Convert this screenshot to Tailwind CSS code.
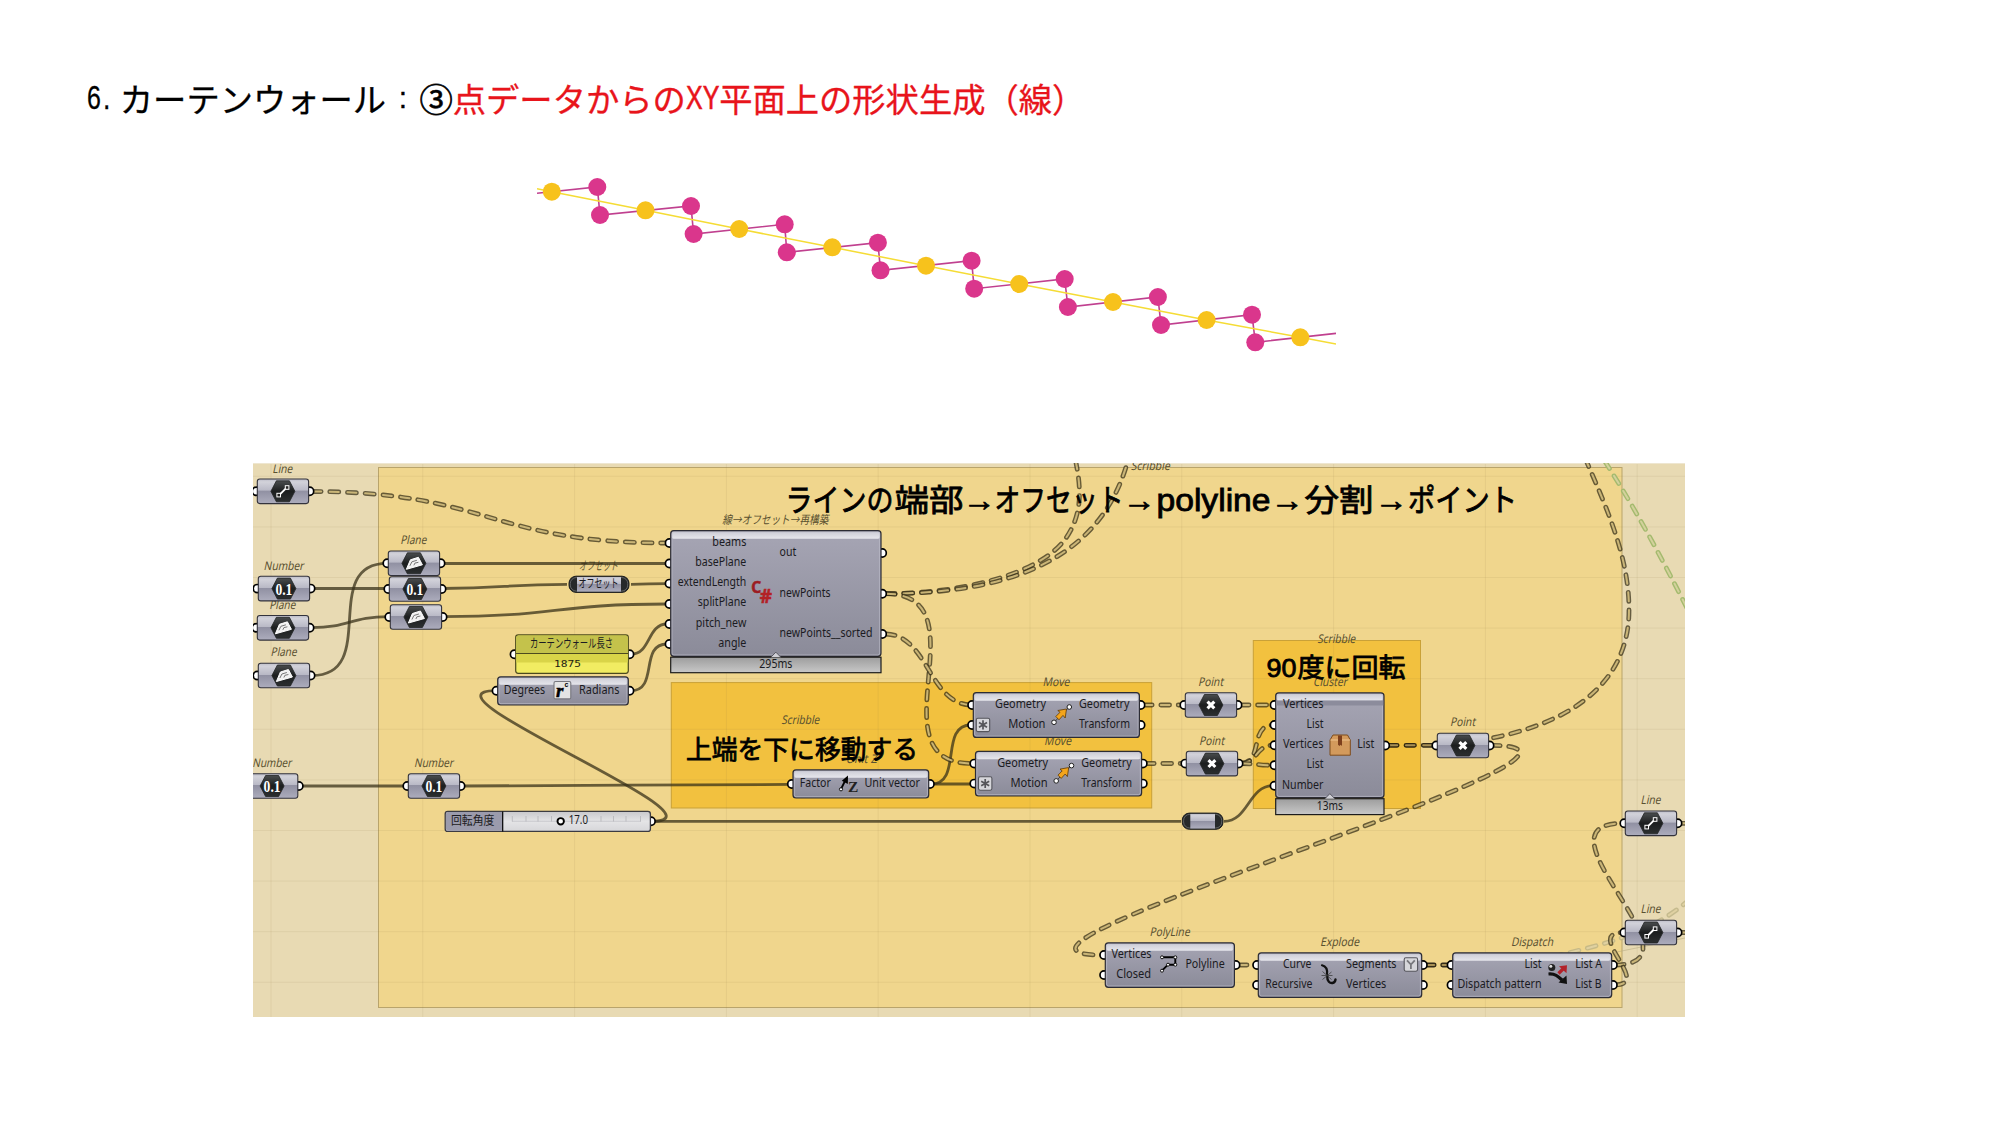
<!DOCTYPE html>
<html lang="ja">
<head>
<meta charset="utf-8">
<title>カーテンウォール</title>
<script src="https://cdn.jsdelivr.net/npm/@tailwindcss/browser@4"></script>
</head>
<body class="bg-white">
<main class="flex h-[1126px] w-[2000px] flex-col overflow-hidden bg-white">
  <h1 class="flex h-[160px] items-start pt-[79px] pl-[86.5px] font-['Noto_Sans_CJK_JP',sans-serif] text-[33.3px] leading-[38px] font-normal whitespace-nowrap text-black [-webkit-text-stroke:0.3px]">
    <span class="flex w-[33.3px] font-['Liberation_Sans',sans-serif]"><span class="inline-block w-[15.5px] origin-left scale-x-75">6</span><span class="inline-block scale-x-80">.</span></span>
    <span>カーテンウォール</span>
    <span class="inline-block w-[33.3px] text-center font-['Liberation_Sans',sans-serif] text-[30px]">:</span>
    <span class="[-webkit-text-stroke:0.7px]">③</span>
    <span class="text-[#e8141b]">点データからの</span>
    <span class="inline-block w-[33.3px] origin-left scale-x-75 font-['Liberation_Sans',sans-serif] text-[#e8141b] [-webkit-text-stroke:0.6px]">XY</span>
    <span class="text-[#e8141b]">平面上の形状生成（線）</span>
  </h1>
  <svg id="zigzag" class="ml-[537px] block h-[200px] w-[799px] shrink-0" viewBox="537 160 799 200"></svg>
  <svg id="canvas" class="mt-[103px] ml-[253px] block h-[554px] w-[1432px] shrink-0 bg-[#e8dab3]" viewBox="253 463 1432 554"></svg>
</main>
<script>
// ---------- zigzag of division points ----------
const mid = [[551.8,191.7],[645.5,210.3],[739.2,229],[832.3,247.3],[926,265.7],[1019.2,284],[1113,302],[1206.6,320],[1300.3,337.3]];
const up = [[597.3,187],[691,206],[784.7,224.3],[877.9,242.7],[971.6,260.7],[1064.7,279],[1157.9,297],[1252,314.7]];
const low = [[600,215],[693.6,234],[786.8,252.3],[880.5,270.3],[974.2,288.7],[1067.9,307],[1161,325],[1255.3,342.3]];
const zig = [[537,193.3]];
up.forEach((p, i) => zig.push(p, low[i]));
zig.push([1336,333.4]);
const dot = (p, c) => `<circle cx="${p[0]}" cy="${p[1]}" r="9" class="${c}"/>`;
document.getElementById('zigzag').innerHTML =
  `<polyline points="${zig.join(' ')}" class="fill-none stroke-[#c0408f] stroke-[1.6]"/>` +
  `<polyline points="${[[537,188.7], ...mid, [1336,344]].join(' ')}" class="fill-none stroke-[#f5dc35] stroke-[1.5]"/>` +
  up.concat(low).map(p => dot(p, 'fill-[#da368c]')).join('') + mid.map(p => dot(p, 'fill-[#f7c21c]')).join('');

// ---------- node graph ----------
let out = `<defs>
<linearGradient id="gs" x2="0" y2="1"><stop offset="0" stop-color="#bdbdc8"/><stop offset=".12" stop-color="#d2d2da"/><stop offset=".46" stop-color="#b9b9c6"/><stop offset=".48" stop-color="#9090a2"/><stop offset="1" stop-color="#adadbd"/></linearGradient>
<linearGradient id="gl" x2="0" y2="1"><stop offset="0" stop-color="#a6a5b4"/><stop offset="1" stop-color="#8b8b99"/></linearGradient>
<linearGradient id="gh" x2="0" y2="1"><stop offset="0" stop-color="#cdcdd6"/><stop offset="1" stop-color="#e6e6ec"/></linearGradient>
<linearGradient id="gt" x2="0" y2="1"><stop offset="0" stop-color="#9d9d9d"/><stop offset="1" stop-color="#c8c8c8"/></linearGradient>
<linearGradient id="gx" x2="0" y2="1"><stop offset="0" stop-color="#4a4d4e"/><stop offset=".5" stop-color="#1c1e1f"/><stop offset="1" stop-color="#2c2f30"/></linearGradient>
<linearGradient id="gw" x2="0" y2="1"><stop offset="0" stop-color="#c8c8cc"/><stop offset=".5" stop-color="#e4e4e6"/><stop offset="1" stop-color="#d6d6d9"/></linearGradient>
</defs>`;
const add = s => { out += s; };

const txt = (s, x, y, w, anchor = 'start') =>
  add(`<text x="${x}" y="${y + 0.5}" text-anchor="${anchor}" ${w ? `textLength="${w}" lengthAdjust="spacingAndGlyphs"` : ''} class="fill-[#1b1b22] font-['Noto_Sans','Noto_Sans_CJK_JP',sans-serif] text-[12px]">${s}</text>`);
const label = (s, cx, y, w) =>
  add(`<g transform="translate(${cx - w / 2 - 0.7} ${y}) skewX(-12)"><text textLength="${w}" lengthAdjust="spacingAndGlyphs" class="fill-[#5a5130] font-['Noto_Sans','Noto_Sans_CJK_JP',sans-serif] text-[12px]">${s}</text></g>`);
const big = (s, x, y, w, size) =>
  add(`<text x="${x}" y="${y}" font-size="${size}" textLength="${w}" lengthAdjust="spacingAndGlyphs" class="fill-black stroke-black stroke-[0.8] font-['Liberation_Sans','Noto_Sans_CJK_JP',sans-serif]">${s}</text>`);
const wire = d => add(`<path d="${d}" class="fill-none stroke-[#3a3119]/75 stroke-[2.8]"/>`);
const dash = (d, kind) => {
  const c = kind === 'green' ? ['stroke-[#a4ba6e]', 'stroke-[#d3d19c]'] : kind === 'faint' ? ['stroke-[#bdb384]/80', 'stroke-[#e6d7a8]/80']
    : kind === 'dark' ? ['stroke-[#1f1a0b]/90', 'stroke-[#a89055]'] : ['stroke-[#3a3119]/75', 'stroke-[#dcc583]/85'];
  add(`<path d="${d}" stroke-dasharray="9 8.7" stroke-dashoffset="-1" stroke-linecap="round" class="fill-none ${c[0]} stroke-[4.8]"/><path d="${d}" stroke-dasharray="9 8.7" stroke-dashoffset="-1" stroke-linecap="round" class="fill-none ${c[1]} stroke-[2]"/>`);
};
const curve = (x0, y0, x1, y1, d = Math.abs(x1 - x0) / 2) => `M${x0},${y0} C${x0 + d},${y0} ${x1 - d},${y1} ${x1},${y1}`;
const port = (x, y) => add(`<circle cx="${x}" cy="${y}" r="4.1" class="fill-white stroke-black stroke-[1.7]"/>`);

// groups and grid
add('<rect x="378.5" y="467.5" width="1243.5" height="540" class="fill-[#f0d68d] stroke-[#b9a46b]"/>');
add('<rect x="671.3" y="682.6" width="480.4" height="125.4" class="fill-[#f2c13f] stroke-[#c9a138]"/>');
add('<rect x="1253.3" y="640.5" width="167.2" height="168" class="fill-[#f2c13f] stroke-[#c9a138]"/>');
for (let i = 0; i < 10; i++) add(`<path d="M${271 + 151.8 * i},463V1017" class="stroke-[#8b7a40]/10"/>`);
for (let i = 0; i < 11; i++) add(`<path d="M253,${476.3 + 50.6 * i}H1685" class="stroke-[#8b7a40]/10"/>`);
add('<path d="M253,463.5H1685" class="stroke-[#eee6d0]"/>');

// captions
label('Line', 283, 472.7, 20); label('Number', 284.3, 570, 40); label('Plane', 283, 608.7, 26); label('Plane', 284.3, 656, 26);
label('Plane', 414, 544, 26); label('オフセット', 599, 570, 39); label('線→オフセット→再構築', 776, 524, 106);
label('Number', 272.5, 767, 39); label('Number', 434.3, 767, 39);
label('Move', 1056.7, 686, 27); label('Move', 1058.3, 744.7, 27); label('Unit Z', 862, 762.5, 31); label('Scribble', 801, 724, 38);
label('Point', 1211.3, 686, 25); label('Point', 1212.3, 744.7, 25); label('Point', 1463.3, 726.3, 25);
label('Cluster', 1330.7, 686.3, 34); label('Scribble', 1337, 642.7, 38); label('Scribble', 1151, 470.3, 39);
label('PolyLine', 1170.3, 935.7, 40); label('Explode', 1340.3, 945.7, 39); label('Dispatch', 1532.7, 946, 42);
label('Line', 1651.3, 804, 20); label('Line', 1651.3, 913.3, 20);

// wires
dash('M1604,460 C1635,508 1660,555 1687,608', 'green');
dash('M1552,957 C1600,945 1650,935 1690,899', 'faint');
add('<path d="M1612,953L1685,938" class="stroke-[#b9ae84]/60"/>');
dash(curve(311, 491.5, 667, 543));
wire(curve(312, 675.5, 387, 563.3, 68));
wire(curve(312, 588.5, 388, 588.5));
wire(curve(311, 627.7, 389, 616.7));
wire(curve(441, 563.5, 667, 563.5));
wire(curve(442, 588.5, 567, 584.3));
wire(curve(631, 584.3, 667, 583.6));
wire(curve(443, 616.7, 667, 604));
wire(curve(631, 654.3, 667, 624, 20));
wire(curve(631, 690.7, 667, 644, 28));
wire(curve(651, 821.3, 496, 690.7, 89));
wire(curve(300, 786, 406, 786));
wire(curve(462, 786, 791, 784.4));
wire(curve(652, 821.3, 1181, 821.3));
wire(curve(1224, 821.3, 1273, 785.7));
wire(curve(931, 784, 971, 725, 32));
wire(curve(931, 784, 973, 784));
dash('M885,593.7 C960,593.7 1040,575 1066,538 C1082,515 1082,490 1075,458');
dash('M885,593.7 C1000,593.7 1100,565 1128,460');
dash(curve(885, 593.7, 972, 763.5, 102));
dash(curve(885, 634, 972, 705));
dash(curve(1142, 705, 1183, 705)); dash(curve(1144, 763.5, 1185, 763.5));
dash(curve(1239, 705, 1273, 705));
dash(curve(1240, 763.5, 1273, 725, 24)); dash(curve(1240, 763.5, 1273, 745.3, 18)); dash(curve(1240, 763.5, 1273, 765.3));
dash(curve(1387, 745.3, 1435, 745.3), 'dark');
dash('M1490,745.3 C1674,745.3 928,955 1102,955');
dash('M1475,741 C1560,728 1629,690 1629,610 C1629,560 1610,515 1585,458');
dash(curve(1614, 965, 1623, 823.3, 97)); dash(curve(1614, 985, 1623, 932.5, 40));
dash(curve(1237, 965, 1256, 965)); dash(curve(1424, 965, 1450, 965), 'dark');
dash(curve(1679, 823.3, 1690, 823.3)); dash(curve(1679, 932.5, 1690, 932.5));

// parameter nodes with hexagonal icon
const hexIcon = {
  line: (x, y) => `<path d="M${x - 4},${y + 4}L${x + 4},${y - 4}" class="stroke-white stroke-[1.8]"/><rect x="${x - 6}" y="${y + 2}" width="3.6" height="3.6" class="fill-[#222] stroke-white"/><rect x="${x + 2.4}" y="${y - 5.6}" width="3.6" height="3.6" class="fill-[#222] stroke-white"/>`,
  num: (x, y) => `<text x="${x}" y="${y + 5.9}" text-anchor="middle" textLength="17" lengthAdjust="spacingAndGlyphs" class="fill-white font-['Liberation_Serif',serif] text-[17px] font-bold">0.1</text>`,
  plane: (x, y) => `<path d="M${x - 7.5},${y + 6}L${x - 3.5},${y - 3.5}L${x + 4.5},${y - 6}L${x + 8.5},${y + 1.5}Z" class="fill-[#f2f2f2] stroke-white"/><path d="M${x - 4},${y + 2.5}L${x - 2},${y - 1.5}L${x + 3},${y - 3}M${x},${y + 2}L${x + 1},${y - .2}L${x + 4.5},${y - 1}" class="fill-none stroke-[#777] stroke-[1]"/>`,
  point: (x, y) => `<path d="M${x - 3.4},${y - 3.4}l6.8,6.8m0,-6.8l-6.8,6.8" class="fill-none stroke-white stroke-[3.1]"/>`
};
const param = (x, y, kind) => {
  const cx = x + 25.6, cy = y + 12.3;
  port(x - 1, cy); port(x + 52.3, cy);
  add(`<rect x="${x}" y="${y}" width="51.3" height="24.6" rx="2.5" fill="url(#gs)" class="stroke-[#33333c] stroke-[1.1]"/>`);
  add(`<path d="M${cx - 12},${cy}L${cx - 6.5},${cy - 10.5}H${cx + 6.5}L${cx + 12},${cy}L${cx + 6.5},${cy + 10.5}H${cx - 6.5}Z" fill="url(#gx)" stroke-linejoin="round" class="stroke-[#222425] stroke-[0.8]"/>` + hexIcon[kind](cx, cy));
};
param(257.3, 479, 'line'); param(258.3, 576.3, 'num'); param(257.3, 615.5, 'plane'); param(258.3, 663.2, 'plane');
param(388.3, 551, 'plane'); param(389.3, 576.7, 'num'); param(390.3, 604.7, 'plane');
param(246.5, 773.7, 'num'); param(408.3, 773.7, 'num');
param(1185.3, 692.7, 'point'); param(1186.3, 751.3, 'point'); param(1437.3, 733.2, 'point');
param(1625.3, 811, 'line'); param(1625.3, 920.2, 'line');

// component bodies
const body = (x, y, r, b, ins, outs) => {
  ins.forEach(v => port(x - 1.2, v)); outs.forEach(v => port(r + 1.2, v));
  add(`<rect x="${x}" y="${y}" width="${r - x}" height="${b - y}" rx="3" fill="url(#gl)"/><rect x="${x + 1}" y="${y + 1}" width="${r - x - 2}" height="7" rx="2" fill="url(#gh)"/><rect x="${x + 1.3}" y="${y + 1.3}" width="${r - x - 2.6}" height="${b - y - 2.6}" rx="2" class="fill-none stroke-[#c3c3d0]/60 stroke-[1]"/><rect x="${x}" y="${y}" width="${r - x}" height="${b - y}" rx="3" class="fill-none stroke-[#2c2c34] stroke-[1.2]"/>`);
};
const timer = (x, y, r, b, s, w) => {
  const c = (x + r) / 2;
  add(`<rect x="${x}" y="${y}" width="${r - x}" height="${b - y}" fill="url(#gt)" class="stroke-[#1c1c1c] stroke-[1.2]"/><path d="M${c - 5},${y}l5,-5l5,5" class="fill-[#cfcfd6] stroke-[#44444c] stroke-[0.8]"/>`);
  txt(s, c, b - 4.9, w, 'middle');
};

// script component
body(670.7, 530.7, 881, 656.3, [543, 563.5, 583.6, 604, 624, 644], [553, 593.7, 634]);
timer(670.7, 657.2, 881, 672.7, '295ms', 33);
[['beams',545.3,34],['basePlane',565.5,51],['extendLength',585.7,68.5],['splitPlane',605.8,48.5],['pitch_new',626,50.5],['angle',646.3,28]].forEach(a => txt(a[0], 746.3, a[1], a[2], 'end'));
txt('out', 779.5, 555.7, 16.7); txt('newPoints', 779.5, 596, 51); txt('newPoints__sorted', 779.5, 636.3, 93);
add(`<text x="751.3" y="593.3" class="fill-[#9c1c22] stroke-[#9c1c22] stroke-[0.5] font-['Noto_Sans',sans-serif] text-[15.5px] font-bold">C</text><text x="759.8" y="603.2" class="fill-[#b32025] stroke-[#b32025] stroke-[0.5] font-['Noto_Sans',sans-serif] text-[19px] font-bold">#</text>`);

// relay capsules
const relay = (x, y, r) => {
  add(`<rect x="${x}" y="${y}" width="${r - x}" height="16.2" rx="7" class="fill-[#26292a] stroke-[#1c1e1f] stroke-[1]"/><rect x="${x + 1.3}" y="${y + 1.3}" width="${r - x - 2.6}" height="13.6" rx="6" class="fill-none stroke-[#6d7072] stroke-[0.8]"/><rect x="${x + 8}" y="${y + .8}" width="${r - x - 16}" height="14.6" fill="url(#gs)"/>`);
};
relay(569, 576.2, 629); relay(1182.3, 813.1, 1223);
txt('オフセット', 578.5, 587.7, 40);

// panel
port(514.5, 654.3); port(629.5, 654.3);
add('<rect x="515.7" y="634.8" width="112.6" height="38.5" rx="2.5" class="fill-[#f1ec62] stroke-[#4c4a1e] stroke-[1.2]"/><path d="M516.3,653.4V637.5a2,2 0 0 1 2,-2H625.7a2,2 0 0 1 2,2V653.4Z" class="fill-[#c4c24b]"/><rect x="516.4" y="654" width="111.3" height="8.5" class="fill-[#d9d448]"/><path d="M516,653.5H628" class="stroke-[#4c4a1e] stroke-[1.2]"/>');
txt('カーテンウォール長さ', 530, 647.3, 83);
add(`<text x="554" y="667" textLength="27" lengthAdjust="spacingAndGlyphs" class="fill-[#1d1d12] font-['DejaVu_Sans_Mono',monospace] text-[9.5px]">1875</text>`);

// radians
body(497.7, 676.8, 628.3, 705, [690.7], [690.7]);
txt('Degrees', 503.7, 693.2, 41.5); txt('Radians', 579, 693.2, 40.5);
add(`<rect x="554" y="681.5" width="16.8" height="17.4" rx="1.5" class="fill-[#e4e4e4] stroke-[#77777e] stroke-[1.1]"/><text x="556" y="696.5" class="fill-black stroke-black stroke-[0.5] font-['Liberation_Serif',serif] text-[19px] font-bold italic">r</text><text x="564.5" y="687" class="fill-black font-['Liberation_Sans',sans-serif] text-[7px] font-bold">c</text>`);

// slider
port(651, 821.3);
add('<rect x="445.2" y="811.4" width="205.2" height="20" rx="2.5" fill="url(#gw)" class="stroke-[#3b3b42] stroke-[1.3]"/><path d="M502.7,812V830.8H448a2,2 0 0 1 -2,-2V814a2,2 0 0 1 2,-2Z" class="fill-[#9b9bac]"/><path d="M502.7,811.4V831.4" class="stroke-black stroke-[1.2]"/><path d="M512,821.3H641" class="stroke-[#c4c4c8] stroke-[0.8]"/>');
[512.3, 526, 538, 551.5, 601, 613.5, 626, 640.5].forEach(x => add(`<path d="M${x},816V821.5" class="stroke-[#b8b8bc] stroke-[0.9]"/>`));
add('<circle cx="560.7" cy="821.3" r="3.2" class="fill-white stroke-black stroke-[1.9]"/>');
txt('回転角度', 451, 824.2, 43.5); txt('17.0', 568.7, 823.7, 19.3);

// unit Z
body(793, 769.8, 928.7, 798, [784], [784]);
txt('Factor', 799.8, 786.3, 31); txt('Unit vector', 864.5, 786.3, 55.5);
add(`<path d="M841,789L845.5,780" class="stroke-black stroke-[1.8]"/><path d="M848,775.5L841.8,780.8L847.8,784Z" class="fill-black"/><circle cx="841" cy="789.3" r="1.6" class="fill-white stroke-black stroke-[0.9]"/><text x="848" y="791.8" class="fill-[#222] font-['Liberation_Serif',serif] text-[15.5px] font-bold">Z</text>`);

// move components
const badge = (x, y, s) => add(`<rect x="${x}" y="${y}" width="13.4" height="13.4" rx="1.6" class="fill-[#d6d6da] stroke-[#55555c] stroke-[1.1]"/>` + s);
const star = (x, y) => `<path d="M${x},${y - 4.6}V${y + 4.6}M${x - 4},${y - 2.3}L${x + 4},${y + 2.3}M${x - 4},${y + 2.3}L${x + 4},${y - 2.3}" class="stroke-[#55555a] stroke-[1.7]"/>`;
[[0, 0], [2.2, 58.6]].forEach(([dx, dy]) => {
  body(973.3 + dx, 692.7 + dy, 1139.4 + dx, 737.4 + dy, [705 + dy, 725 + dy], [705 + dy, 725 + dy]);
  txt('Geometry', 995 + dx, 707.4 + dy, 51); txt('Motion', 1008.2 + dx, 727.4 + dy, 37.3);
  txt('Geometry', 1079 + dx, 707.4 + dy, 50.5); txt('Transform', 1079 + dx, 727.4 + dy, 51);
  badge(976.3 + dx, 718.2 + dy, star(983 + dx, 724.9 + dy));
  add(`<g transform="translate(${dx} ${dy})"><path d="M1054,722.3L1069.3,707" class="stroke-[#333] stroke-[0.9]"/><path d="M1055.8,716.5L1060,712.3L1057.8,710.5L1066.5,709L1065.2,718L1063,715.4L1059,719.8Z" class="fill-[#f4a51c] stroke-[#5e3a08] stroke-[0.8]"/><circle cx="1054" cy="722.3" r="2.3" class="fill-white stroke-[#222]"/><circle cx="1069.3" cy="707" r="2.3" class="fill-white stroke-[#222]"/></g>`);
});

// cluster
body(1275.7, 692.8, 1384, 797.7, [705, 725, 745.3, 765.3, 785.7], [745.5]);
add('<rect x="1276.6" y="700.5" width="106.6" height="5" class="fill-[#8c8c9c]"/>');
timer(1275.7, 798.7, 1384, 814.6, '13ms', 26);
[['Vertices',707.4,40.5],['List',727.5,17],['Vertices',747.7,40.5],['List',767.8,17],['Number',788.2,41.5]].forEach(a => txt(a[0], 1323.5, a[1], a[2], 'end'));
txt('List', 1357.3, 747.7, 17);
add('<path d="M1330,740L1333,735H1347.5L1350.3,740V755.2H1330Z" stroke-linejoin="round" class="fill-[#d39a5c] stroke-[#7d4c1d] stroke-[1]"/><path d="M1330.5,740H1350" class="stroke-[#f0c48e] stroke-[1]"/><path d="M1338,735.4H1342V746L1340.7,744.8L1339.5,746L1338,744.8Z" class="fill-[#7d3f1c]"/>');

// polyline
body(1105.3, 942.8, 1234.4, 987.3, [955, 975], [965]);
txt('Vertices', 1111.5, 957.2, 40); txt('Closed', 1116.2, 977.2, 35); txt('Polyline', 1185.4, 967.2, 39.3);
add('<path d="M1162,957.3H1175.3V964.7H1168L1162,970.7" class="fill-none stroke-black stroke-[1.9]"/>');
[[1162,957.3],[1175.3,957.3],[1175.3,964.7],[1168,964.7],[1162,970.7]].forEach(p => add(`<circle cx="${p[0]}" cy="${p[1]}" r="1.5" class="fill-white stroke-black stroke-[0.9]"/>`));

// explode
body(1258.3, 952.8, 1421.7, 997.4, [965, 985], [965, 985]);
txt('Curve', 1283, 967.3, 28.5); txt('Recursive', 1265.2, 987.5, 47.3); txt('Segments', 1346, 967.3, 50.5); txt('Vertices', 1346, 987.5, 40.3);
badge(1404.2, 957.8, '<path d="M1407,960.3L1410.9,964.5L1414.8,960.3M1410.9,964.5V969" class="fill-none stroke-[#77777c] stroke-[1.8]"/>');
add('<path d="M1322,965.3C1326.5,966.5 1327.5,970 1327,974" stroke-linecap="round" class="fill-none stroke-[#111] stroke-[2.2]"/><path d="M1327.3,976.5C1327,981.5 1330,983.4 1332.5,983C1334.5,982.6 1335.3,981 1335.5,979.5" stroke-linecap="round" class="fill-none stroke-[#111] stroke-[2.4]"/><path d="M1322.5,971.5L1331.5,979.5M1331.5,972L1322.5,979.5M1321.5,975.5H1332.5" class="stroke-[#333] stroke-[0.7]"/>');

// dispatch
body(1452.7, 952.8, 1611.7, 997.6, [965, 985], [965, 985]);
txt('List', 1524.5, 967.3, 17); txt('Dispatch pattern', 1457.5, 987.3, 84); txt('List A', 1575.2, 967.3, 27); txt('List B', 1575.2, 987.3, 26.3);
add('<path d="M1548.5,974C1555,973.5 1558,976 1562,980" class="fill-none stroke-[#111] stroke-[3.2]"/><path d="M1567,984L1566.5,975.5L1558.5,982.5Z" class="fill-[#111]"/><path d="M1558.5,973.5L1563,969" class="stroke-[#b3222a] stroke-[3.2]"/><path d="M1567,965.3L1559,966.2L1566.5,973.2Z" class="fill-[#b3222a]"/><circle cx="1551.8" cy="967.5" r="3.5" class="fill-[#222]"/><circle cx="1550.8" cy="966.2" r="1.5" class="fill-[#ddd]"/>');

// handwritten notes
big('ラインの', 785.5, 510.5, 108, 31); big('端部', 894.5, 510.5, 69, 31); big('→', 963, 510.5, 33, 31);
big('オフセット', 994.5, 510.5, 129, 31); big('→', 1123, 510.5, 33, 31); big('polyline', 1156.5, 510.5, 114, 30.5); big('→', 1271, 510.5, 33, 31);
big('分割', 1304.5, 510.5, 69, 31); big('→', 1375, 510.5, 33, 31); big('ポイント', 1408, 510.5, 109, 31);
big('上端を下に移動する', 686, 758.5, 232, 26); big('90', 1266.5, 677, 30, 26); big('度に回転', 1297.5, 677, 108, 26);

document.getElementById('canvas').innerHTML = out;
</script>
</body>
</html>
